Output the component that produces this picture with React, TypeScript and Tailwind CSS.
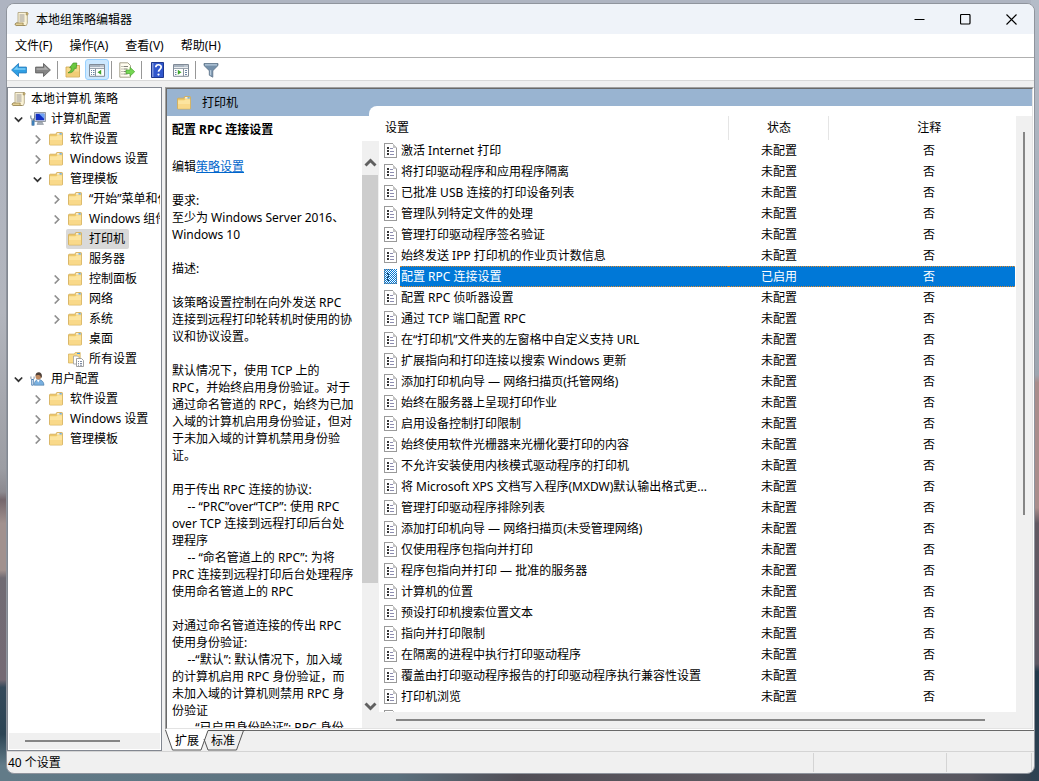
import React, { useState } from 'react';
import clsx from 'clsx';

type IconKind = 'scroll' | 'computer' | 'user' | 'folder' | 'all';

interface TreeNode {
  label: string;
  level: 0 | 1 | 2 | 3;
  icon: IconKind;
  state?: 'open' | 'closed';
}

const TREE: TreeNode[] = [
  { label: '本地计算机 策略', level: 0, icon: 'scroll' },
  { label: '计算机配置', level: 1, icon: 'computer', state: 'open' },
  { label: '软件设置', level: 2, icon: 'folder', state: 'closed' },
  { label: 'Windows 设置', level: 2, icon: 'folder', state: 'closed' },
  { label: '管理模板', level: 2, icon: 'folder', state: 'open' },
  { label: '“开始”菜单和任务栏', level: 3, icon: 'folder', state: 'closed' },
  { label: 'Windows 组件', level: 3, icon: 'folder', state: 'closed' },
  { label: '打印机', level: 3, icon: 'folder' },
  { label: '服务器', level: 3, icon: 'folder' },
  { label: '控制面板', level: 3, icon: 'folder', state: 'closed' },
  { label: '网络', level: 3, icon: 'folder', state: 'closed' },
  { label: '系统', level: 3, icon: 'folder', state: 'closed' },
  { label: '桌面', level: 3, icon: 'folder' },
  { label: '所有设置', level: 3, icon: 'all' },
  { label: '用户配置', level: 1, icon: 'user', state: 'open' },
  { label: '软件设置', level: 2, icon: 'folder', state: 'closed' },
  { label: 'Windows 设置', level: 2, icon: 'folder', state: 'closed' },
  { label: '管理模板', level: 2, icon: 'folder', state: 'closed' },
];

const LEVEL_PADDING = ['pl-0', 'pl-0', 'pl-[19px]', 'pl-[38px]'];

const SETTINGS = [
  '激活 Internet 打印',
  '将打印驱动程序和应用程序隔离',
  '已批准 USB 连接的打印设备列表',
  '管理队列特定文件的处理',
  '管理打印驱动程序签名验证',
  '始终发送 IPP 打印机的作业页计数信息',
  '配置 RPC 连接设置',
  '配置 RPC 侦听器设置',
  '通过 TCP 端口配置 RPC',
  '在“打印机”文件夹的左窗格中自定义支持 URL',
  '扩展指向和打印连接以搜索 Windows 更新',
  '添加打印机向导 — 网络扫描页(托管网络)',
  '始终在服务器上呈现打印作业',
  '启用设备控制打印限制',
  '始终使用软件光栅器来光栅化要打印的内容',
  '不允许安装使用内核模式驱动程序的打印机',
  '将 Microsoft XPS 文档写入程序(MXDW)默认输出格式更...',
  '管理打印驱动程序排除列表',
  '添加打印机向导 — 网络扫描页(未受管理网络)',
  '仅使用程序包指向并打印',
  '程序包指向并打印 — 批准的服务器',
  '计算机的位置',
  '预设打印机搜索位置文本',
  '指向并打印限制',
  '在隔离的进程中执行打印驱动程序',
  '覆盖由打印驱动程序报告的打印驱动程序执行兼容性设置',
  '打印机浏览',
];

const DESCRIPTION = `要求:
至少为 Windows Server 2016、
Windows 10

描述:

该策略设置控制在向外发送 RPC
连接到远程打印轮转机时使用的协
议和协议设置。

默认情况下，使用 TCP 上的
RPC，并始终启用身份验证。对于
通过命名管道的 RPC，始终为已加
入域的计算机启用身份验证，但对
于未加入域的计算机禁用身份验
证。

用于传出 RPC 连接的协议:
     -- “PRC”over“TCP”: 使用 RPC
over TCP 连接到远程打印后台处
理程序
     -- “命名管道上的 RPC”: 为将
PRC 连接到远程打印后台处理程序
使用命名管道上的 RPC

对通过命名管道连接的传出 RPC
使用身份验证:
     --“默认”: 默认情况下，加入域
的计算机启用 RPC 身份验证，而
未加入域的计算机则禁用 RPC 身
份验证
     --“已启用身份验证”: RPC 身份`;

function ScrollIcon() {
  return (
    <svg className="w-4 h-4 shrink-0" viewBox="0 0 16 16" fill="none">
      <path d="M4 1.500h9.300v10.700l-1 2.300H2.200C.9 14.300.9 12.200 2.200 12H4z" fill="#fbf3d6" stroke="#a89c78" strokeWidth=".8" />
      <path d="M2.200 12h7.200c-.8.800-.4 2.500 1.200 2.500H2.200C.9 14.300.9 12.300 2.200 12z" fill="#e2cf95" stroke="#8f7c4a" strokeWidth=".7" />
      <path d="M12.400 1.600c1.900-.3 2.500 2 .9 2.300h-1.200z" fill="#d8bf7b" stroke="#8f7c4a" strokeWidth=".6" />
      <path d="M5.500 4h5M5.500 6h5M5.500 8h5M5.500 10h5" stroke="#8d8d92" strokeWidth=".9" />
    </svg>
  );
}

function FolderIcon() {
  return (
    <svg className="w-4 h-4 shrink-0" viewBox="0 0 16 16">
      <path d="M.5 4c0-.5.300-.8.800-.8h5.500l1-1.700h5c.5 0 .7.300.7.700v11.200c0 .4-.3.600-.7.600H1.300c-.5 0-.8-.2-.8-.7z" fill="#edc869" stroke="#d3ac55" strokeWidth=".8" />
      <path d="M8.200 2.200h4.500v1.300H8z" fill="#fff" />
      <path d="M10.500 2.200h2.200v1.200h-2.200z" fill="#4b9be0" />
      <path d="M1 5.200h6.300l1.200-1h4.600v9.300H1z" fill="#fce49f" />
      <path d="M1 9h12v4.500H1z" fill="#f6d27d" opacity=".6" />
    </svg>
  );
}

function AllSettingsIcon() {
  return (
    <svg className="w-4 h-4 shrink-0" viewBox="0 0 16 16">
      <path d="M.5 3h5.800l1-1.500h4.900V12H.5z" fill="#fadb88" stroke="#d3ac55" strokeWidth=".7" />
      <path d="M9 2h3v1H9z" fill="#4b9be0" />
      <path d="M5.500 5h4l1.800 1.800V13H5.500z" fill="#fff" stroke="#a0a0a0" strokeWidth=".8" />
      <path d="M8.500 7.500h5l2 2v6h-7z" fill="#fff" stroke="#8a8a8a" strokeWidth=".8" />
      <path d="M10 10.500h1m1 0h2m-4 2h1m1 0h2m-4 1.700h1m1 0h2" stroke="#5c6b88" strokeWidth=".8" />
    </svg>
  );
}

function ComputerIcon() {
  return (
    <svg className="w-4 h-4 shrink-0" viewBox="0 0 16 16">
      <path d="M4.500 1.500h11v9h-11z" fill="#d9dde3" stroke="#7d858f" strokeWidth=".8" />
      <path d="M5.700 2.700h8.600v6.500H5.700z" fill="#1330c4" />
      <path d="M9 2.700h5.300V8z" fill="#6ea2f5" />
      <path d="M8 10.800h4l1.500 2.700H7z" fill="#a9b0b8" stroke="#7d858f" strokeWidth=".5" />
      <path d="M.8 4.500v2c0 1 .7 1.500 1.200 1.500v6h1.500V8c.7 0 1.200-.5 1.200-1.500v-2" fill="none" stroke="#6c7f94" strokeWidth="1.100" />
      <path d="M2 9.500h2.500v5H2z" fill="#3f7fb8" />
    </svg>
  );
}

function UserIcon() {
  return (
    <svg className="w-4 h-4 shrink-0" viewBox="0 0 16 16">
      <path d="M4.200 14.200c0-3.700 1.800-5.700 4.300-5.700s5.500 2 5.500 5.700z" fill="#79b0e0" stroke="#4778a5" strokeWidth=".6" />
      <path d="M6.800 8.800l1.400 2.700 1.600-2.700z" fill="#fff" />
      <circle cx="8.400" cy="5.500" r="2.900" fill="#c08a60" />
      <path d="M5.500 4.800C5.500 2.300 7 1.200 8.800 1.200s3.500 1.600 3.100 4.500l-.9 1.500c-.2-2.200-1.200-3.100-2.500-3.100-1.300-.1-2.200.2-3 .7z" fill="#4d4038" />
      <path d="M.9 5.500v1.800c0 .7.400 1.200 1 1.200h1.200c.6 0 1-.5 1-1.200V5.500" fill="none" stroke="#7f8fa2" strokeWidth="1" />
      <path d="M1.700 8.500h1.600v5.700H1.700z" fill="#fff" stroke="#2f6ba8" strokeWidth=".8" />
    </svg>
  );
}

function TreeIcon({ kind }: { kind: IconKind }) {
  if (kind === 'scroll') return <ScrollIcon />;
  if (kind === 'computer') return <ComputerIcon />;
  if (kind === 'user') return <UserIcon />;
  if (kind === 'all') return <AllSettingsIcon />;
  return <FolderIcon />;
}

function ArrowIcon({ forward }: { forward?: boolean }) {
  return (
    <svg className={clsx('w-4 h-4', forward && 'rotate-180')} viewBox="0 0 16 16">
      <path
        d="M.6 8l6.900-6.500v3.600h7.900v5.800H7.500v3.600z"
        fill={forward ? '#858585' : '#2f9fe4'}
        stroke={forward ? '#626262' : '#2a7fc0'}
        strokeWidth=".9"
        strokeLinejoin="round"
      />
      <path
        d={forward ? 'M2.500 8.300l4 3.800V9.800h8V8.300z' : 'M2.500 7.700l4-3.800v2.300h8v1.500z'}
        fill={forward ? '#b0b0b0' : '#7fd0f7'}
      />
    </svg>
  );
}

function FolderUpIcon() {
  return (
    <svg className="w-4 h-4" viewBox="0 0 16 16">
      <path d="M1 5h6l1-1.500h6.500v11.500H1z" fill="#f7da8d" stroke="#cda24a" strokeWidth=".8" />
      <path d="M1.500 9.500h12.600v5H1.500z" fill="#edc468" opacity=".6" />
      <path d="M3 10.800c2.400-1 3.300-2.600 3.200-5L4.700 5.700 8.200 1h3.600l-.6 5.600-1.700-.5c-.3 3.200-2.600 5.100-6.500 4.700z" fill="#6cc93f" stroke="#3f9125" strokeWidth=".7" />
    </svg>
  );
}

function PaneIcon({ play }: { play?: boolean }) {
  return (
    <svg className="w-4 h-4" viewBox="0 0 16 16">
      <path d="M.5 2.500h15v11.800H.5z" fill="#fff" stroke="#808a96" />
      <path d="M1 3h14v2.200H1z" fill="#a9b4c0" />
      <path d="M11.500 4h1m1 0h1" stroke="#fff" />
      <path d="M1 6.500h14" stroke="#9ba4ae" />
      {play ? (
        <>
          <path d="M10.500 6.500v7.500" stroke="#8b949f" />
          <path d="M12 8.500h2m-2 2h2m-2 2h2M2 8.500h1.500m-1.500 2h1.500m-1.500 2h1.500" stroke="#6d86a5" />
          <path d="M4.800 7.800v5l3.700-2.500z" fill="#3da52a" />
        </>
      ) : (
        <>
          <path d="M6.500 6.500v7.500" stroke="#8b949f" />
          <path d="M2 8.500h1m1 0h1.500M2 10.500h1m1 0h1.500M2 12.500h1m1 0h1.500" stroke="#6d86a5" />
          <path d="M12.200 7.800v5L8.500 10.300z" fill="#3da52a" />
        </>
      )}
    </svg>
  );
}

function ExportIcon() {
  return (
    <svg className="w-4 h-4" viewBox="0 0 16 16">
      <path d="M.8.800h8l2.700 2.700v11.700H.8z" fill="#fffdf0" stroke="#9c977f" strokeWidth=".9" />
      <path d="M2.500 4.500h1m1 0h4.500m-6.500 2.500h1m1 0h4m-6 2.500h1m1 0h3m-5 2.500h1m1 0h4" stroke="#75756c" strokeWidth=".9" />
      <path d="M7 8h4V5.300l4.700 4.400-4.700 4.500v-2.700H7z" fill="#74d653" stroke="#4aa52e" strokeWidth=".7" />
    </svg>
  );
}

function HelpIcon() {
  return (
    <svg className="w-4 h-4" viewBox="0 0 16 16">
      <path d="M2.500.5h12v15h-12z" fill="#3157cc" stroke="#1d378f" />
      <path d="M3 1h1.500v14H3z" fill="#8097dc" />
      <path d="M6.800 5.300c0-3.400 5.400-3.300 5.400-.2 0 2.200-2.700 2.300-2.700 4.700" fill="none" stroke="#fff" strokeWidth="1.700" />
      <circle cx="9.500" cy="12.600" r="1.100" fill="#fff" />
    </svg>
  );
}

function FilterIcon() {
  return (
    <svg className="w-4 h-4" viewBox="0 0 16 16">
      <path d="M1 1.500h14v2L9.800 8.700v6.500l-3.500-2V8.700L1 3.500z" fill="#7590aa" stroke="#5d7489" strokeWidth=".8" strokeLinejoin="round" />
      <path d="M2 2.200h12v1.200H2z" fill="#b8cbdc" />
      <path d="M7.200 8.300V13l1 .5V8z" fill="#c9d9e7" />
    </svg>
  );
}

function PolicyIcon() {
  return (
    <svg className="w-[13px] h-[15px] shrink-0" viewBox="0 0 13 15" shapeRendering="crispEdges">
      <path d="M0 0h9l4 4v11H0z" fill="#fff" />
      <path d="M0 0h9v1H1v13h11V4h1v11H0z" fill="#9a9a9a" />
      <path d="M9 1h1v1h1v1h1v1h1v1H9z" fill="#c4c4c4" />
      <path d="M3 4h2v2H3zM3 7h2v2H3zM3 10h2v2H3z" fill="#333" />
      <path d="M6 5h3v1H6zM6 8h4v1H6zM6 11h4v1H6z" fill="#8d8db0" />
    </svg>
  );
}

function SelectedPolicyIcon() {
  return (
    <svg className="w-[13px] h-[15px] shrink-0" viewBox="0 0 13 15" shapeRendering="crispEdges">
      <defs>
        <pattern id="hatch" width="2" height="2" patternUnits="userSpaceOnUse">
          <path d="M0 0h1v1H0zM1 1h1v1H1z" fill="#0078d7" />
        </pattern>
      </defs>
      <path d="M0 0h13v15H0z" fill="#fff" />
      <path d="M0 0h9v1H1v13h11V4h1v11H0z" fill="#9a9a9a" />
      <path d="M3 4h2v2H3zM3 7h2v2H3zM3 10h2v2H3z" fill="#333" />
      <path d="M0 0h13v15H0z" fill="url(#hatch)" />
    </svg>
  );
}

function Chevron({ open }: { open: boolean }) {
  return (
    <svg className="w-[9px] h-[9px]" viewBox="0 0 9 9" fill="none">
      {open ? (
        <path d="M.8 2.500L4.500 6.200 8.200 2.500" stroke="#333" strokeWidth="1.700" />
      ) : (
        <path d="M2.700.500l4 4-4 4" stroke="#909090" strokeWidth="1.700" />
      )}
    </svg>
  );
}

function ToolButton({ label, active, children }: { label: string; active?: boolean; children: React.ReactNode }) {
  return (
    <button
      aria-label={label}
      className={clsx(
        'w-6 h-[21px] flex items-center justify-center border rounded-[3px]',
        active ? 'bg-[#cce8ff] border-[#99d1ff]' : 'border-transparent'
      )}
    >
      {children}
    </button>
  );
}

function ToolSeparator() {
  return <div className="w-px h-[18px] bg-[#979797] ml-0.5 mr-[3px]" />;
}

function TitleBar() {
  return (
    <header className="h-[30px] shrink-0 flex items-center justify-between bg-[#eff3f9]">
      <div className="flex items-center gap-1.5 pl-[7px]">
        <ScrollIcon />
        <h1>本地组策略编辑器</h1>
      </div>
      <div className="flex h-full">
        <button aria-label="最小化" className="w-[46px] flex items-center justify-center">
          <svg className="w-[11px] h-[11px]" viewBox="0 0 11 11"><path d="M.5 5.500h10" stroke="#000" /></svg>
        </button>
        <button aria-label="最大化" className="w-[46px] flex items-center justify-center">
          <svg className="w-[11px] h-[11px]" viewBox="0 0 11 11"><rect x=".5" y=".5" width="9.500" height="9.500" rx="1" fill="none" stroke="#000" strokeWidth="1.200" /></svg>
        </button>
        <button aria-label="关闭" className="w-[46px] flex items-center justify-center">
          <svg className="w-[11px] h-[11px]" viewBox="0 0 11 11"><path d="M.5.500l10 10m0-10l-10 10" stroke="#000" strokeWidth="1.100" /></svg>
        </button>
      </div>
    </header>
  );
}

function Toolbar() {
  return (
    <div className="h-[23px] shrink-0 flex items-center pt-px bg-white border-b border-[#d9d9d9]">
      <ToolButton label="后退"><ArrowIcon /></ToolButton>
      <ToolButton label="前进"><ArrowIcon forward /></ToolButton>
      <ToolSeparator />
      <ToolButton label="上一级"><FolderUpIcon /></ToolButton>
      <ToolButton label="显示/隐藏控制台树" active><PaneIcon /></ToolButton>
      <ToolSeparator />
      <ToolButton label="导出列表"><ExportIcon /></ToolButton>
      <ToolSeparator />
      <ToolButton label="帮助"><HelpIcon /></ToolButton>
      <ToolButton label="显示/隐藏操作窗格"><PaneIcon play /></ToolButton>
      <ToolSeparator />
      <ToolButton label="筛选器"><FilterIcon /></ToolButton>
    </div>
  );
}

function ConsoleTree() {
  const [current, setCurrent] = useState(7);

  return (
    <nav className="w-[155px] shrink-0 flex flex-col bg-white border border-[#828790] p-px">
      <ul className="flex-1 min-h-0 overflow-hidden">
        {TREE.map((node, index) => (
          <li key={index} className={clsx('h-5 flex items-center', LEVEL_PADDING[node.level])}>
            {node.level > 0 && (
              <span className="w-[19px] shrink-0 flex justify-center">
                {node.state && <Chevron open={node.state === 'open'} />}
              </span>
            )}
            <button
              onClick={() => setCurrent(index)}
              className={clsx(
                'h-5 shrink-0 flex items-center pl-0.5 pr-1 pb-px rounded-[2px] whitespace-nowrap',
                node.level === 0 ? 'gap-1' : 'gap-[5px]',
                current === index && 'bg-[#d9d9d9]'
              )}
            >
              <TreeIcon kind={node.icon} />
              {node.label}
            </button>
          </li>
        ))}
      </ul>
      {/* 水平滚动条 */}
      <div className="h-4 shrink-0 bg-[#f0f0f0] flex items-center px-4">
        <div className="h-0.5 w-[95px] bg-[#868686]" />
      </div>
    </nav>
  );
}

function DescriptionPane() {
  return (
    <section className="w-[212px] shrink-0 flex flex-col">
      <h2 className="h-[25px] shrink-0 flex items-center pt-px pl-[5px] font-bold">配置 RPC 连接设置</h2>
      <div className="flex-1 min-h-0 flex">
        <div className="flex-1 min-w-0 overflow-hidden pl-[5px] pt-[17px] leading-[17px] whitespace-pre">
          <p className="mb-[17px]">
            编辑<a href="#policy" className="text-[#0066cc] underline">策略设置</a>
          </p>
          <p>{DESCRIPTION}</p>
        </div>
        <div className="w-[17px] shrink-0 flex flex-col bg-[#f0f0f0]">
          <button aria-label="向上滚动" className="h-[34px] shrink-0 flex items-end justify-center pb-2">
            <svg className="w-[13px] h-[9px]" viewBox="0 0 13 9"><path d="M1.500 7.500l5-5 5 5" fill="none" stroke="#606060" strokeWidth="2.900" /></svg>
          </button>
          <div className="flex-1 min-h-0">
            <div className="h-[78%] mr-px bg-[#cdcdcd]" />
          </div>
          <button aria-label="向下滚动" className="h-[30px] shrink-0 flex items-start justify-center pt-1">
            <svg className="w-[13px] h-[9px]" viewBox="0 0 13 9"><path d="M1.500 1.500l5 5 5-5" fill="none" stroke="#606060" strokeWidth="2.900" /></svg>
          </button>
        </div>
      </div>
    </section>
  );
}

function SettingsList() {
  const [selected, setSelected] = useState(6);
  const selectedCell = 'bg-[#0078d7] text-white border-y border-dotted border-[#e08a2c]';

  return (
    <section className="flex-1 min-w-0 flex flex-col bg-[#f0f0f0]">
      <div className="flex-1 min-h-0 flex">
        <div className="flex-1 min-w-0 overflow-hidden bg-white">
          <table className="w-full table-fixed">
            <colgroup>
              <col />
              <col className="w-[100px]" />
              <col className="w-[188px]" />
            </colgroup>
            <thead>
              <tr className="h-6">
                <th className="p-0 pb-px pl-[6px] text-left font-normal border-r border-[#e5e5e5]">设置</th>
                <th className="p-0 pb-px pl-0.5 font-normal border-r border-[#e5e5e5]">状态</th>
                <th className="p-0 pb-px pl-[14px] font-normal">注释</th>
              </tr>
            </thead>
            <tbody>
              {SETTINGS.map((name, index) => {
                const isSelected = index === selected;
                return (
                  <tr key={name} onClick={() => setSelected(index)}>
                    <td className="p-0">
                      <div className="h-[21px] flex items-center gap-[3px] pl-[5px]">
                        {isSelected ? <SelectedPolicyIcon /> : <PolicyIcon />}
                        <span className={clsx('h-[21px] flex-1 min-w-0 flex items-center pl-px whitespace-nowrap', isSelected && selectedCell)}>
                          {name}
                        </span>
                      </div>
                    </td>
                    <td className="p-0">
                      <div className={clsx('h-[21px] flex items-center justify-center pl-0.5', isSelected && selectedCell)}>
                        {isSelected ? '已启用' : '未配置'}
                      </div>
                    </td>
                    <td className="p-0 pr-px">
                      <div className={clsx('h-[21px] flex items-center justify-center pl-[15px]', isSelected && selectedCell)}>
                        否
                      </div>
                    </td>
                  </tr>
                );
              })}
              {/* 下一行只露出图标上沿 */}
              <tr aria-hidden="true">
                <td className="p-0">
                  <div className="h-[21px] flex items-center pl-[5px]"><PolicyIcon /></div>
                </td>
              </tr>
            </tbody>
          </table>
        </div>
        <div className="w-4 shrink-0 flex justify-center pt-4">
          <div className="w-0.5 h-[66%] bg-[#868686]" />
        </div>
      </div>
      <div className="h-4 shrink-0 flex items-center pl-[17px] pr-[47px]">
        <div className="h-0.5 flex-1 bg-[#868686]" />
      </div>
    </section>
  );
}

function ViewTabs() {
  return (
    <div className="relative h-[21px] shrink-0 flex">
      <svg className="absolute left-0 top-0 w-20 h-[21px]" viewBox="0 0 80 21" fill="none">
        <path d="M0 0h43l-7 20H8z" fill="#fff" />
        <path d="M.5 0l7 20h28.500l7-19.500H80M39 9l4 11h28.500l7-19.500" stroke="#555" />
      </svg>
      <button className="relative ml-[9px] w-[26px]">扩展</button>
      <button className="relative ml-[10px] w-[26px]">标准</button>
      <div className="flex-1 ml-2 border-t border-[#696969]" />
    </div>
  );
}

export default function App() {
  return (
    <main
      lang="zh-CN"
      className="relative h-screen flex pl-[6px] pt-[3px] pr-1 pb-[7px] overflow-hidden text-[12px] leading-[17px] text-black font-['Noto_Sans','Noto_Sans_CJK_SC',sans-serif] bg-[linear-gradient(to_bottom,#aeb4c1_0%,#b2b5bd_40%,#9c9da3_60%,#8c8a90_63%,#75676c_64%,#a1918e_67%,#a1918e_73%,#706b73_74%,#756a74_87%,#34495a_88%,#2c4454_94%,#627b88_98%)]"
    >
      {/* 桌面壁纸右侧与底边 */}
      <div className="absolute right-0 top-0 bottom-0 w-2 bg-[linear-gradient(to_bottom,#b4bcc8_0%,#9ea6b0_48%,#a98e8c_49%,#a98e8c_65%,#625a63_67%,#5d5863_85%,#22394a_86%,#2f4252_100%)]" />
      <div className="absolute left-2 right-2 bottom-0 h-3 bg-[linear-gradient(to_right,#627b88_0%,#5b707d_38%,#514e56_50%,#625e65_80%,#57565f_94%,#34414f_100%)]" />

      <div className="relative flex-1 min-w-0 flex flex-col bg-[#f0f0f0] border border-[#8f949d] rounded-lg overflow-hidden">
        <TitleBar />
        <nav className="h-6 shrink-0 flex items-center gap-px bg-white border-b border-[#b0b0b0]">
          <button className="px-2">文件(F)</button>
          <button className="px-2">操作(A)</button>
          <button className="px-2">查看(V)</button>
          <button className="px-2">帮助(H)</button>
        </nav>
        <Toolbar />

        <div className="flex-1 min-h-0 flex gap-[3px] pt-[6px]">
          <ConsoleTree />
          <div className="flex-1 min-w-0 flex flex-col">
            <div className="flex-1 min-h-0 flex border border-t-[#a0a0a0] border-l-[#a0a0a0] border-r-white border-b-white">
              <div className="flex-1 min-w-0 flex flex-col bg-white border border-t-[#696969] border-l-[#696969] border-r-[#e3e3e3] border-b-[#e3e3e3]">
                <div className="h-[27px] shrink-0 flex items-end bg-[#99b4d1]">
                  <div className="w-[202px] h-full flex items-center gap-[9px] pl-[10px]">
                    <FolderIcon />
                    打印机
                  </div>
                  <div className="flex-1 h-[10px] bg-white rounded-tl-lg" />
                </div>
                <div className="flex-1 min-h-0 flex">
                  <DescriptionPane />
                  <SettingsList />
                </div>
              </div>
            </div>
            <ViewTabs />
          </div>
        </div>

        <footer className="h-[22px] shrink-0 flex border-t border-[#d4d4d4]">
          <div className="flex-1 flex items-center pl-px">40 个设置</div>
          <div className="w-[133px] my-px border-l border-[#d4d4d4]" />
          <div className="w-[86px] my-px mr-0.5 border-x border-[#d4d4d4]" />
        </footer>
      </div>
    </main>
  );
}
